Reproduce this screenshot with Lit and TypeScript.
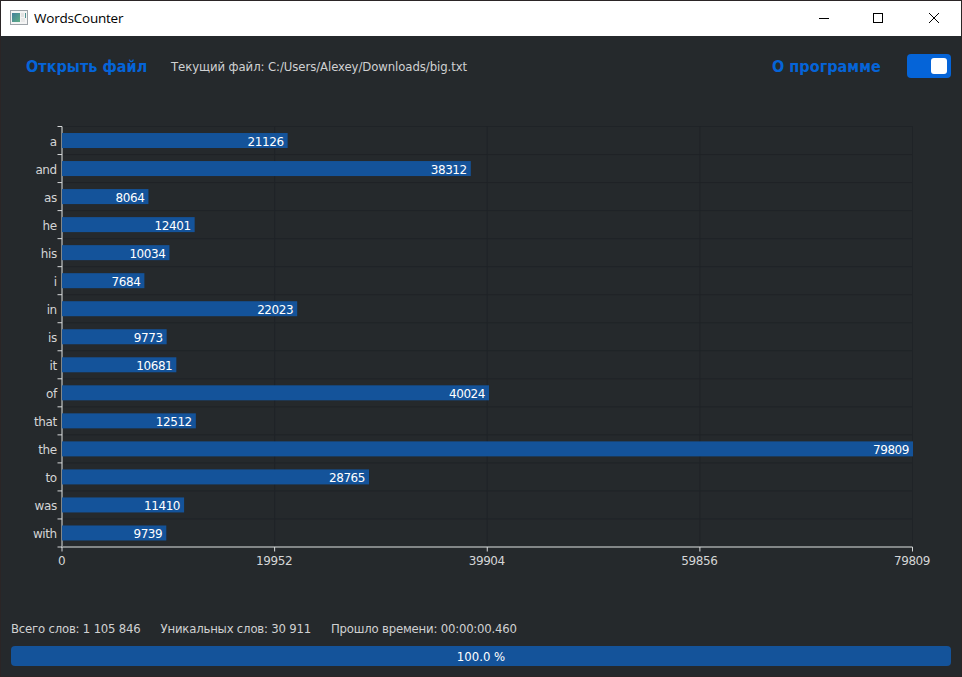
import { LitElement, html, svg, css } from "lit";
import { customElement } from "lit/decorators.js";

interface WordCount { word: string; count: number; }

const WORDS: WordCount[] = [
  { word: "a", count: 21126 },
  { word: "and", count: 38312 },
  { word: "as", count: 8064 },
  { word: "he", count: 12401 },
  { word: "his", count: 10034 },
  { word: "i", count: 7684 },
  { word: "in", count: 22023 },
  { word: "is", count: 9773 },
  { word: "it", count: 10681 },
  { word: "of", count: 40024 },
  { word: "that", count: 12512 },
  { word: "the", count: 79809 },
  { word: "to", count: 28765 },
  { word: "was", count: 11410 },
  { word: "with", count: 9739 },
];

const MAX = 79809;
const PLOT = { left: 62, top: 36.5, width: 850.5, height: 420.5 };
const BAR = 15;

@customElement("word-chart")
export class WordChart extends LitElement {
  static styles = css`
    :host { display: block; }
    svg { display: block; }
    .grid { stroke: #1f2327; stroke-width: 1; }
    .axis { stroke: #828687; stroke-width: 2; }
    .tick { stroke: #d5d7d8; stroke-width: 1; }
    .bar { fill: #14539a; }
    text { font: 12px "DejaVu Sans", sans-serif; letter-spacing: -0.43px; fill: #d4d5d6; }
    .value { fill: #fff; }
    .value, .word { text-anchor: end; }
    .word { letter-spacing: -0.4px; }
    .scale { text-anchor: middle; }
  `;

  render() {
    const { left, top, width, height } = PLOT;
    const bottom = top + height;
    const step = height / WORDS.length;
    const rows = WORDS.map((_, i) => top + i * step);
    const marks = [0, 1, 2, 3, 4].map((i) => ({
      x: left + (width * i) / 4,
      label: Math.floor((MAX * i) / 4),
    }));
    return html`<svg width="960" height="520" viewBox="1 0 960 520">
      ${rows.map((y) => svg`<line class="grid" x1=${left} x2=${left + width} y1=${y} y2=${y} />`)}
      ${marks.slice(1).map((m) => svg`<line class="grid" x1=${m.x} x2=${m.x} y1=${top} y2=${bottom} />`)}
      <line class="axis" x1=${left} x2=${left} y1=${top} y2=${bottom + 1} />
      <line class="axis" x1=${left - 1} x2=${left + width} y1=${bottom} y2=${bottom} />
      ${[...rows, bottom].map((y) => svg`<line class="tick" x1=${left - 4.5} x2=${left} y1=${y} y2=${y} />`)}
      ${marks.map((m) => svg`
        <line class="tick" x1=${m.x} x2=${m.x} y1=${bottom} y2=${bottom + 4.5} />
        <text class="scale" x=${m.x - 0.5} y=${bottom + 18}>${m.label}</text>`)}
      ${WORDS.map((w, i) => {
        const mid = rows[i] + step / 2;
        const end = (w.count / MAX) * width;
        return svg`
          <rect class="bar" x=${left} y=${mid - BAR / 2} width=${end + 0.5} height=${BAR} />
          <text class="word" x="56.8" y=${Math.round(mid + 5)}>${w.word}</text>
          <text class="value" x=${left + end - 3.5} y=${Math.round(mid + 5)}>${w.count}</text>`;
      })}
    </svg>`;
  }
}

@customElement("app-root")
export class AppRoot extends LitElement {
  static styles = css`
    :host {
      display: flex;
      flex-direction: column;
      box-sizing: border-box;
      width: 962px;
      height: 677px;
      border: 1px solid #2b2526;
      background: #25292c;
      color: #d0d1d2;
      font: 13px "DejaVu Sans Condensed", "DejaVu Sans", sans-serif;
      white-space: pre;
      overflow: hidden;
    }
    .titlebar {
      display: flex;
      align-items: center;
      height: 35px;
      flex: none;
      background: #fff;
      color: #000;
    }
    .app-icon { margin: 0 6px 2px 9px; }
    .title { flex: 1; font: 13.5px "Open Sans", sans-serif; letter-spacing: -0.22px; padding-bottom: 1px; }
    .controls { display: flex; gap: 44px; margin: 0 22px 1px 0; }
    .controls svg { display: block; }
    .controls .close { margin-left: 2px; }
    .toolbar {
      display: flex;
      align-items: center;
      height: 60px;
      flex: none;
      padding: 0 10px 0 25px;
    }
    .link {
      color: #0564d8;
      font: bold 16px "DejaVu Sans Condensed", "DejaVu Sans", sans-serif;
      letter-spacing: 0.05px;
    }
    .open { width: 120px; }
    .about { width: 109px; }
    .file { flex: 1; margin-left: 25px; letter-spacing: -0.08px; }
    .toggle {
      display: flex;
      justify-content: flex-end;
      align-items: center;
      box-sizing: border-box;
      width: 44px;
      height: 24px;
      margin-left: 26px;
      padding-right: 4px;
      border-radius: 4px;
      background: #0564d8;
    }
    .knob { width: 16px; height: 16px; border-radius: 3px; background: #fff; }
    word-chart { margin-top: -6px; }
    .stats {
      display: flex;
      gap: 20px;
      height: 16px;
      line-height: 16px;
      margin: 11px 10px 9px;
      letter-spacing: -0.2px;
    }
    .progress {
      height: 20px;
      line-height: 21px;
      margin: 0 10px;
      border-radius: 4px;
      background: #14539a;
      color: #fff;
      text-align: center;
    }
  `;

  render() {
    return html`
      <div class="titlebar">
        <svg class="app-icon" width="18" height="15" viewBox="0 0 18 15">
          <defs>
            <linearGradient id="pane" x1="0" y1="0" x2="1" y2="1">
              <stop offset="0" stop-color="#427f9b" />
              <stop offset="1" stop-color="#5fae85" />
            </linearGradient>
          </defs>
          <rect x=".5" y=".5" width="17" height="14" fill="#f4f4f4" stroke="#9da3a8" />
          <rect x="2" y="3" width="8" height="9" fill="url(#pane)" />
          <rect x="11" y="3" width="3" height="4" fill="#e2e2e2" />
          <rect x="11" y="8" width="4" height="4" fill="#e8e8e8" />
          <rect x="15" y="3" width="1" height="5" fill="#4f9090" />
        </svg>
        <span class="title">WordsCounter</span>
        <div class="controls">
          <svg width="10" height="10"><path d="M0 5.5H10" stroke="#000" /></svg>
          <svg width="10" height="10"><rect x=".5" y=".5" width="9" height="9" fill="none" stroke="#000" /></svg>
          <svg class="close" width="10" height="10"><path d="M0 0L10 10M10 0L0 10" stroke="#000" /></svg>
        </div>
      </div>
      <div class="toolbar">
        <span class="link open">Открыть файл</span>
        <span class="file">Текущий файл: C:/Users/Alexey/Downloads/big.txt</span>
        <span class="link about">О программе</span>
        <div class="toggle"><div class="knob"></div></div>
      </div>
      <word-chart></word-chart>
      <div class="stats">
        <span>Всего слов: 1 105 846</span>
        <span>Уникальных слов: 30 911</span>
        <span>Прошло времени: 00:00:00.460</span>
      </div>
      <div class="progress">100.0 %</div>
    `;
  }
}
